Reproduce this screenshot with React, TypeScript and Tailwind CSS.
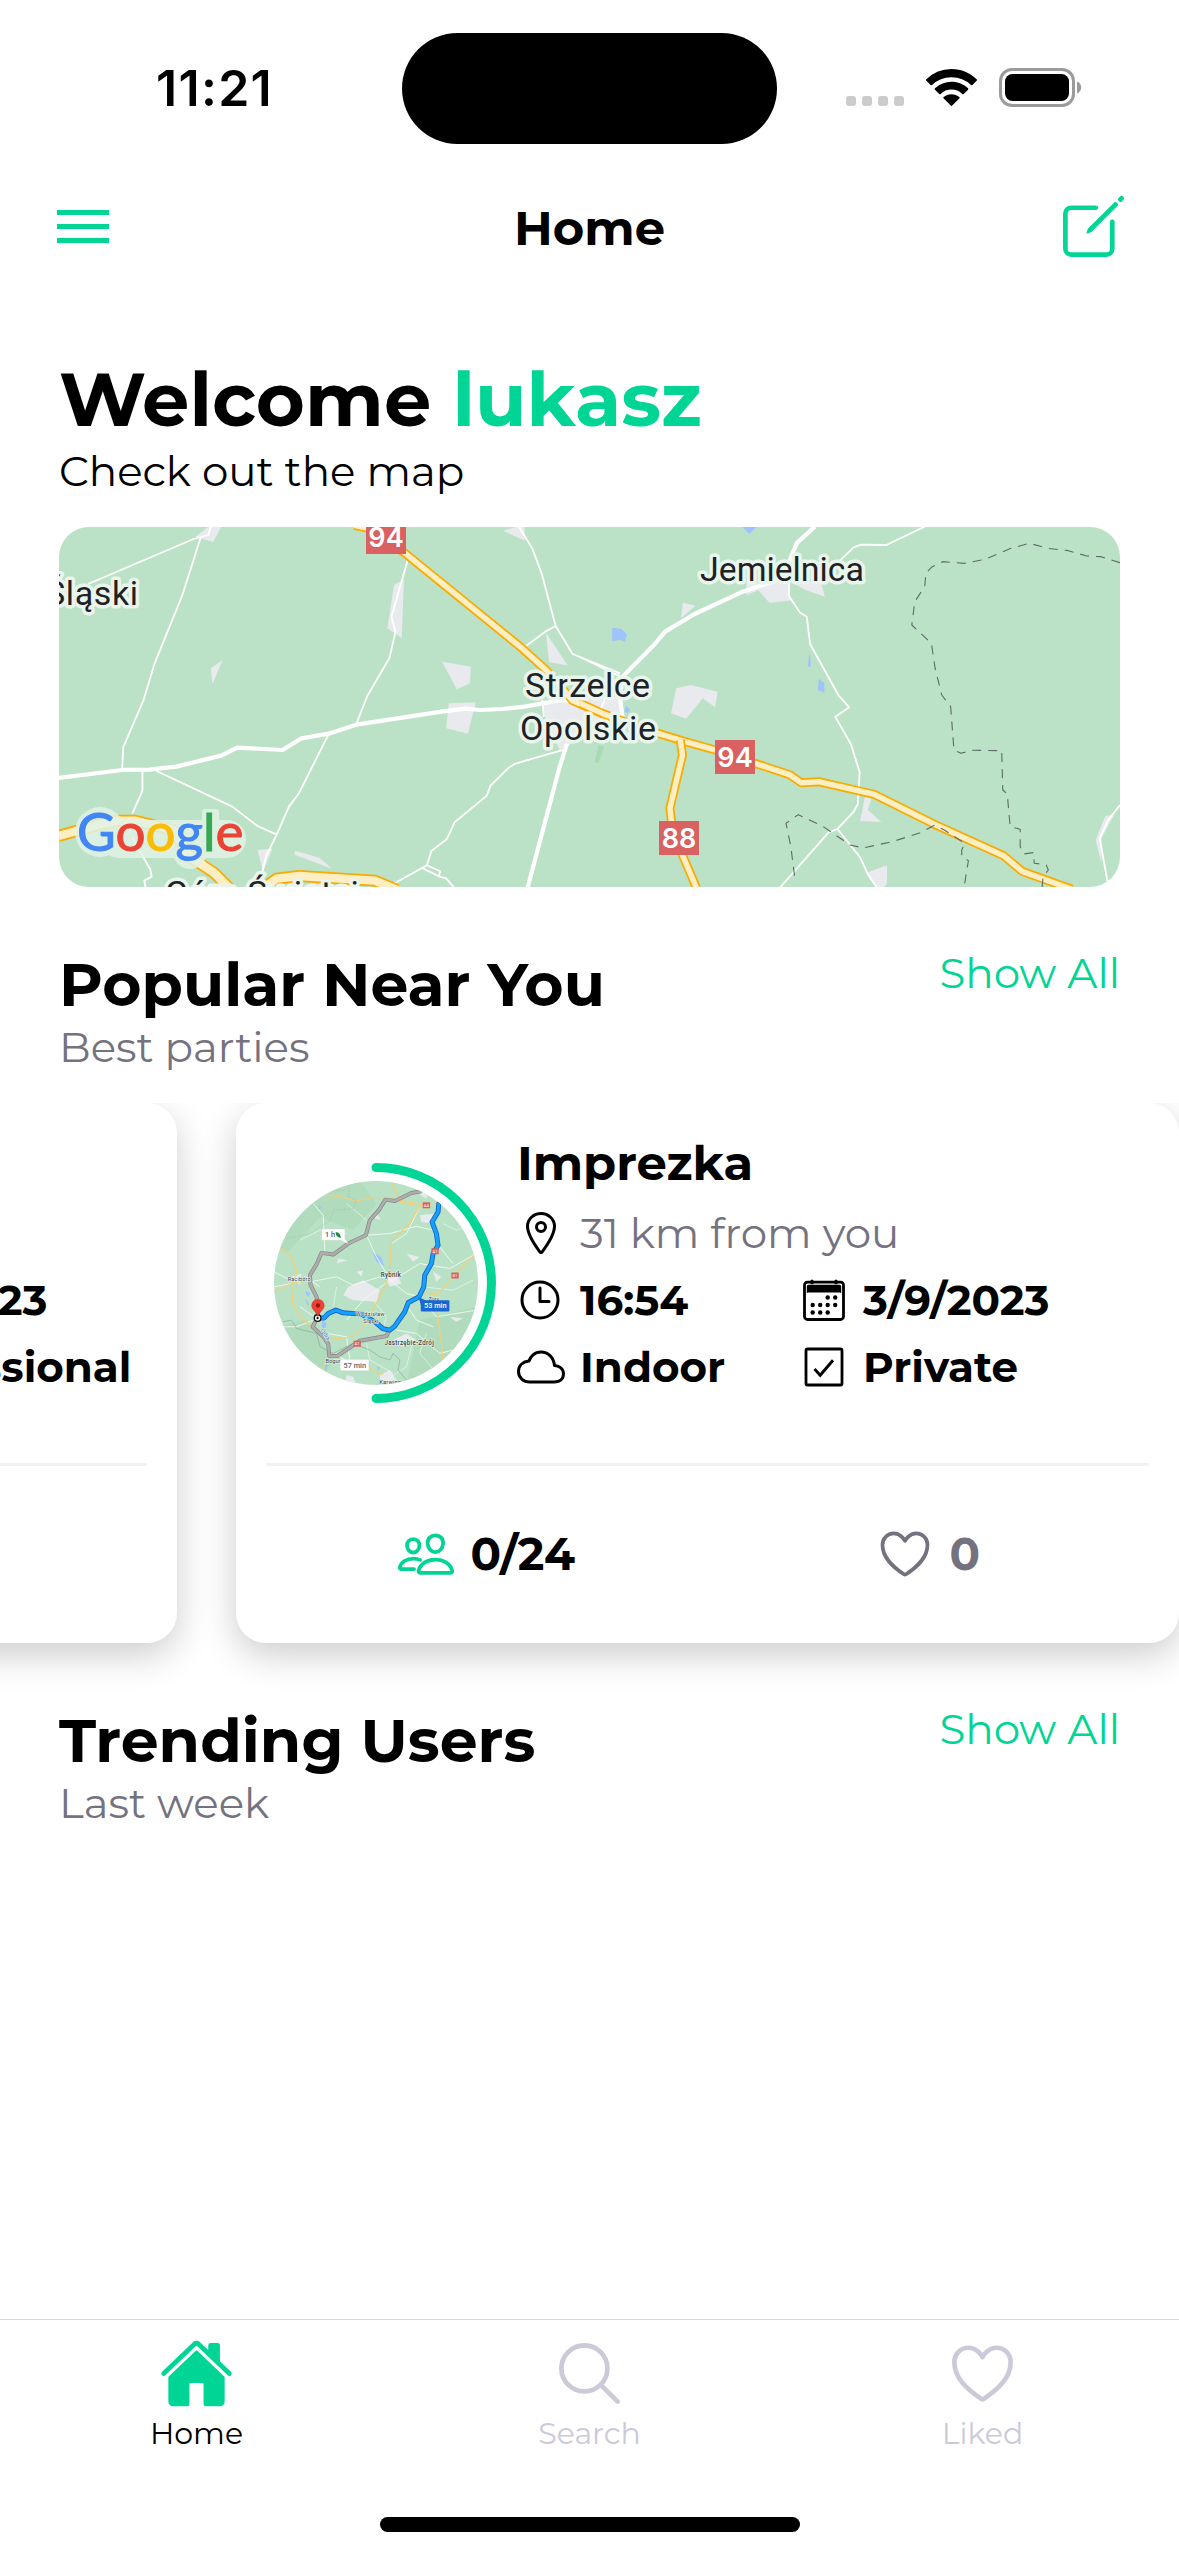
import React from "react";
import {
  IoCloudOutline,
  IoCreateOutline,
  IoHeartOutline,
  IoHome,
  IoLocationOutline,
  IoPeopleOutline,
  IoSearchOutline,
  IoTimeOutline,
} from "react-icons/io5";

function StatusBar() {
  return (
    <div className="flex h-[177px] items-start pt-[33px]">
      <div className="w-[402px] pt-[25px] pl-[156px] font-['Inter',sans-serif] text-[50px] leading-[60px] font-semibold tracking-[1.3px]">
        11:21
      </div>
      <div className="h-[111px] w-[375px] rounded-full bg-black" />
      <div className="flex items-end pt-[35px] pl-[69px]">
        <div className="mb-px flex gap-[6px]">
          {[0, 1, 2, 3].map((i) => (
            <span key={i} className="h-[10px] w-[10px] rounded-[3px] bg-[#cccccc]" />
          ))}
        </div>
        <svg className="mb-px ml-[22px] h-[37px] w-[51px]" viewBox="0 0 51 37">
          <path d="M25.5 0C35.3 0 44.2 3.9 50.6 10.2a1 1 0 0 1 0 1.5l-4.2 4.3a1 1 0 0 1-1.4 0A28 28 0 0 0 25.5 8.200 28 28 0 0 0 6 16a1 1 0 0 1-1.400 0L.4 11.700a1 1 0 0 1 0-1.500A36 36 0 0 1 25.500 0z" />
          <path d="M25.5 12.700c6.400 0 12.200 2.500 16.500 6.500a1 1 0 0 1 0 1.500l-4.200 4.200a1 1 0 0 1-1.400 0 16 16 0 0 0-21.800 0 1 1 0 0 1-1.400 0L9 20.700a1 1 0 0 1 0-1.500 24 24 0 0 1 16.500-6.500z" />
          <path d="M25.5 25.200c3 0 5.800 1.100 7.800 2.900a1 1 0 0 1 0 1.500l-7.100 7a1 1 0 0 1-1.400 0l-7.100-7a1 1 0 0 1 0-1.500c2-1.800 4.800-2.900 7.800-2.900z" />
        </svg>
        <svg className="ml-[22px] h-[39px] w-[83px]" viewBox="0 0 83 39">
          <rect x="1.5" y="1.5" width="73" height="36" rx="11.500" fill="none" stroke="#9b9b9b" strokeWidth="3" />
          <rect x="6" y="6" width="64" height="27" rx="7.500" />
          <path d="M78 13.500c2.800 1 4.200 3.500 4.200 6s-1.400 5-4.200 6z" fill="#9b9b9b" />
        </svg>
      </div>
    </div>
  );
}

function Header() {
  return (
    <div className="flex h-[99px] items-center justify-between pr-[48px] pl-[57px]">
      <div className="flex w-[66px] flex-col gap-[9px]">
        <span className="h-[5px] w-[52px] bg-[#00d595]" />
        <span className="h-[5px] w-[52px] bg-[#00d595]" />
        <span className="h-[5px] w-[52px] bg-[#00d595]" />
      </div>
      <h1 className="pt-[3px] text-[48px] leading-[59px] font-bold">Home</h1>
      <IoCreateOutline className="size-[75px] text-[#00d595]" />
    </div>
  );
}

const THIN = "M130 222 415 87 455 75 462 50|M435 80 385 255 310 460 280 570 225 712 222 780|M277 780V842L250 910|M315 783 520 890 588 948 640 974|M780 673 700 850 673 890 640 974 612 1036 600 1090|M995 147 950 320 961 365 945 443 885 558 855 642|M1295 50 1332 118 1356 190 1394 348 1440 432 1568 490|M1310 411 1366 365 1394 348|M1415 720 1350 740 1283 762 1265 775 1218 827 1208 857 1121 937 1100 987 1058 1023 1046 1066 955 1122|M1046 1066 1082 1084 1078 1099 1036 1076M1078 1099 1098 1105 1120 1134|M250 985 298 1078 302 1100 282 1112 285 1134|M1358 570 1362 620";
const THIN_R = "M700 155 740 112 760 104 828 105 932 50|M565 215V258L595 308 613 320 622 402 700 558 728 592 690 620 733 704 756 787 751 882 740 905 696 957 757 1042 778 1092 803 1134|M696 957 672 967 540 1134|M0 441 110 500|M1460 885 1428 930 1405 985 1427 1120|M70 560 55 600";
const BORDER_R = "M1460 158 1408 140 1370 138 1320 122 1265 115 1215 100 1165 115 1095 148 1040 160 980 155 950 172 935 190 932 230 905 275 897 345 950 400 960 475 978 555 1002 590 1011 720 1030 730 1060 721 1140 722 1143 840 1155 852 1163 950 1190 958 1190 1010 1200 1032 1226 1028 1228 1060 1260 1064 1266 1080 1252 1100 1249 1134|M1040 1120 1050 1052 1032 1040 1032 1020 1040 1000 985 960 958 946 920 968 845 995 765 1014 730 1005 655 948 590 914 557 940 570 1010 582 1115";

function Paths({ d, ...rest }: { d: string } & React.SVGProps<SVGPathElement>) {
  return <path d={d.split("|").join("")} fill="none" vectorEffect="non-scaling-stroke" strokeLinejoin="round" {...rest} />;
}

function Highway({ d, w = 6.500 }: { d: string; w?: number }) {
  return (
    <>
      <Paths d={d} stroke="#f9ab00" strokeWidth={w + 2.500} />
      <Paths d={d} stroke="#feeec3" strokeWidth={w - 1} />
    </>
  );
}

function Shield({ x, y, n }: { x: number; y: number; n: string }) {
  return (
    <>
      <rect x={x} y={y} width="40" height="34" fill="#d96162" />
      <text x={x + 20} y={y + 27} textAnchor="middle" className="fill-white font-['Inter',sans-serif] text-[27px] font-semibold">
        {n}
      </text>
    </>
  );
}

function Town({ x, y, w, children }: { x: number; y: number; w: number; children: string }) {
  return (
    <text
      x={x}
      y={y}
      textLength={w}
      className="fill-[#202124] stroke-[#e9f5ec] stroke-[7px] font-['Roboto',sans-serif] text-[34px] [paint-order:stroke] [stroke-linejoin:round]"
    >
      {children}
    </text>
  );
}

function RegionMap() {
  return (
    <svg className="mt-[31px] h-[360px] w-[1061px] rounded-[30px] bg-[#bbe2c6]" viewBox="59 527 1061 360">
      <g transform="translate(40 510) scale(.3699 .3333)">
        <path
          fill="#e8eaed"
          d="M420 80 455 50H490L468 96zM462 475 494 450 466 522zM957 225 984 208 978 384 939 355zM1087 455 1165 470 1162 520 1127 538zM1105 580 1178 577 1157 671 1098 655zM1252 62 1290 50H1310V92zM1368 368 1426 466 1376 457zM588 1020 628 1016 603 1085zM690 1022 755 1043 790 1076 688 1034zM1360 580 1500 560H1568L1540 640 1440 700 1405 720 1365 620z"
        />
        <path fill="#9fc3fc" d="M1547 353 1568 356V390L1547 392z" />
        <path fill="#a8dab5" d="M1510 705 1525 710 1510 760 1499 757z" />
        <Paths d={THIN} stroke="#fff" strokeWidth="1.8" />
        <Paths
          d="M50 804 222 780 295 779 368 770 490 737 533 713 656 720 707 685 780 671 855 644 1090 604 1150 596 1190 600 1250 597 1310 590 1400 572 1450 570"
          stroke="#fff"
          strokeWidth="4.200"
        />
        <Paths d="M1318 1134 1405 770 1425 700" stroke="#fff" strokeWidth="4.200" />
        <Highway d="M850 46 890 56 985 128 1115 245 1300 412 1370 482 1440 572 1568 634" />
        <Highway d="M50 978 160 944 210 932 255 932 360 960 405 1040 470 1088 512 1134" w={9.500} />
        <Highway d="M605 1134 640 1106 700 1098 905 1112 965 1140" w={9.500} />
      </g>
      <g transform="translate(580 510) scale(.3699 .3333)">
        <path
          fill="#e8eaed"
          d="M450 218H565L568 272 512 278 482 240 450 256zM570 215 652 218 662 260 610 240zM278 278 312 287 273 325zM260 535 300 525 372 545 365 592 332 565 287 626 246 610zM770 862 788 866 778 900 815 936 757 933zM778 1087 830 1066V1120L820 1134H800zM1420 918 1445 912 1410 985V1060L1394 990zM30 565H110L118 620 60 600z"
        />
        <path fill="#9fc3fc" d="M438 50H478L458 72zM90 354 112 357 127 373 122 395 108 389 87 392zM619 435H622L624 470H616zM646 506 660 520 661 548 643 540zM125 587 136 600 128 610 120 604z" />
        <Paths d={THIN_R} stroke="#fff" strokeWidth="1.8" />
        <Paths d="M635 50 587 98 567 150 562 200 440 245 310 312 230 365 200 405 115 500 108 560 115 620" stroke="#fff" strokeWidth="4.200" />
        <Highway d="M0 580 60 610 120 635 205 668 275 692 365 720 568 795 598 818 645 815 795 853 958 943 1145 1037 1195 1084 1330 1138" />
        <Highway d="M271 690 277 735 243 895 248 940 275 1030 315 1134" />
        <Paths d={BORDER_R} stroke="#5d6b66" strokeWidth="1.1" strokeDasharray="9 7" />
      </g>
      <Shield x={366} y={520} n="94" />
      <Shield x={715} y={740} n="94" />
      <Shield x={659} y={821} n="88" />
      <Town x={45} y={605} w={93}>Śląski</Town>
      <Town x={700} y={581} w={164}>Jemielnica</Town>
      <Town x={525} y={697} w={125}>Strzelce</Town>
      <Town x={520} y={740} w={136}>Opolskie</Town>
      <Town x={165} y={905} w={194}>Góra Świętej</Town>
      <g fill="#e2f2e6" opacity=".85">
        <circle cx="100" cy="832" r="25" />
        <rect x="100" y="820" width="146" height="38" rx="19" />
        <rect x="202" y="809" width="17" height="48" rx="2" />
        <circle cx="190" cy="852" r="17" />
      </g>
      <text x="77" y="851" className="font-['Lato',sans-serif] text-[53px]">
        <tspan fill="#4285f4" className="stroke-[#4285f4] stroke-1">G</tspan>
        <tspan fill="#ea4335" className="stroke-[#ea4335] stroke-1">o</tspan>
        <tspan fill="#fbbc05" className="stroke-[#fbbc05] stroke-1">o</tspan>
        <tspan fill="#4285f4" className="stroke-[#4285f4] stroke-1">g</tspan>
        <tspan fill="#34a853" className="stroke-[#34a853] stroke-1">l</tspan>
        <tspan fill="#ea4335" className="stroke-[#ea4335] stroke-1">e</tspan>
      </text>
    </svg>
  );
}

function RouteLabel({ x, y, w, blue, children }: { x: number; y: number; w: number; blue?: boolean; children: string }) {
  return (
    <>
      <rect x={x} y={y} width={w} height="34" rx="3" fill={blue ? "#1967d2" : "#fff"} stroke={blue ? "none" : "#c9cdc9"} />
      <text x={x + 10} y={y + 25} fill={blue ? "#fff" : "#5f6368"} className="font-['Roboto',sans-serif] text-[22px] font-medium">
        {children}
      </text>
    </>
  );
}

function RouteMap() {
  const grey = "M605 213 575 218 525 242 497 238 478 268 450 300 438 345 385 370 340 403 305 398 290 432 270 465 272 495 290 530 294 590 278 620 310 650 325 672 328 708 352 708 420 662 500 648 508 630";
  const blue = "M294 594 312 594 325 580 348 570 370 578 425 582 465 605 490 626 510 630 525 618 555 575 565 548 598 530 612 500 615 465 635 430 640 400 655 375 650 340 637 305 655 275 657 250";
  return (
    <svg className="size-[204px] rounded-full bg-[#b9e1c5]" viewBox="162 182 613 613">
      <path fill="#acd9b9" d="M162 182H420L470 250 400 330 300 290 200 400 162 380zM600 600 775 560V795H560zM162 620 260 600 340 720 300 795H162z" opacity=".6" />
      <path fill="#e8eaed" d="M385 500 430 480 480 510 470 545 400 540 370 525zM490 455 530 460 545 490 510 500zM600 285 650 280 640 310 605 305zM480 765 510 750 540 795H480zM520 660 560 640 590 660 550 680zM380 765 400 770 410 795H375zM215 470 245 460 240 495zM560 400 600 410 580 425zM410 455 430 450 425 470zM690 590 730 595 710 605zM355 415 385 420 350 430zM590 215 625 205 620 235zM455 290 470 280 485 300zM640 455 665 470 650 485z" />
      <path fill="#9fc3fc" d="M458 396 485 410 492 437 470 425zM258 512 270 518 268 530 258 524zM256 535 268 552 262 556zM308 600 320 610 316 628 305 620zM315 735 325 735 315 755zM296 255 306 262 298 268zM472 738 480 745 474 752z" />
      <g fill="none" stroke="#f4fbf6" strokeWidth="3" opacity=".85">
        <path d="M162 455 200 475 270 480 300 500M280 250 310 285 315 395M438 345 510 340 590 318 640 330M270 485 350 470 400 495 480 470 520 480 600 430 690 445 770 400M510 480 560 520 600 530 650 590 770 570M162 500 215 490M240 560 290 595M440 345 470 410 500 460M510 480 430 540 380 600M320 640 380 650 390 720M530 630 590 640 660 700 700 690M600 260 560 340 515 370M660 380 700 430M180 620 230 620 280 600M555 545 590 600 640 620" />
        <path d="M350 500 340 560M460 540 500 590 490 626M610 500 700 510 760 480M440 670 450 720 520 760M580 660 560 740 500 780M620 640 600 700 650 760M240 360 300 330 380 340M380 250 440 300M670 310 710 330 740 320" strokeWidth="2" />
      </g>
      <g fill="none" stroke="#f6cf75" strokeWidth="3.500">
        <path d="M310 225 360 228 410 242 470 230 530 238 620 255 660 245M515 182 530 215 540 245 600 258 570 310 515 360 510 440 500 490 470 550 430 620 400 650 330 658M180 385 210 402 232 460 215 490 218 550 250 600 280 620M162 515 215 490 270 480M600 515 650 525 680 495 705 460 765 405M650 530 655 600 665 670 670 720M350 715 330 700 310 740 308 770M440 740 490 765" />
      </g>
      <path d="M190 605 215 600 230 625 290 640 300 680 340 700 400 670 450 690 480 710 510 720 520 700 540 720 535 750 560 780" fill="none" stroke="#84a391" strokeWidth="1.800" />
      <path d="M300 215 370 210 390 200 385 230 410 240 400 265 340 270 330 300 270 340 200 355" fill="none" stroke="#93b8a0" strokeWidth="1.500" strokeDasharray="4 4" />
      <path d={grey} fill="none" stroke="#858585" strokeWidth="12" strokeLinejoin="round" />
      <path d={grey} fill="none" stroke="#adadad" strokeWidth="8" strokeLinejoin="round" />
      <path d={blue} fill="none" stroke="#1566c8" strokeWidth="15" strokeLinejoin="round" strokeLinecap="round" />
      <path d={blue} fill="none" stroke="#16a0ff" strokeWidth="9.500" strokeLinejoin="round" strokeLinecap="round" />
      {[
        [609, 246, "A4"],
        [635, 384, "A1"],
        [695, 457, "81"],
        [401, 662, "A1"],
      ].map(([x, y, t], i) => (
        <g key={i}>
          <rect x={x as number} y={y as number} width="22" height="18" fill="#d96162" />
          <text x={(x as number) + 11} y={(y as number) + 14} textAnchor="middle" className="fill-white font-['Roboto',sans-serif] text-[13px]">
            {t}
          </text>
        </g>
      ))}
      <g className="fill-[#3c4043] stroke-[#e9f5ec] stroke-[3px] font-['Roboto',sans-serif] text-[19px] font-medium [paint-order:stroke]">
        <text x="483" y="469" textLength="60">Rybnik</text>
        <text x="203" y="483" textLength="68" className="text-[17px] font-normal">Racibórz</text>
        <text x="408" y="587" textLength="86" className="text-[17px] font-normal">Wodzisław</text>
        <text x="430" y="609" textLength="46" className="text-[17px] font-normal">Śląski</text>
        <text x="626" y="542" className="text-[16px] font-normal">Żory</text>
        <text x="494" y="675" textLength="148">Jastrzębie-Zdrój</text>
        <text x="317" y="728" className="text-[17px] font-normal">Bogumin</text>
        <text x="478" y="793" textLength="66" className="text-[18px] font-normal">Karwina</text>
        <text transform="translate(302 630) rotate(58)" className="fill-[#3f7fd0] text-[18px] font-normal">Odra</text>
      </g>
      <path d="M362 360 385 370 372 352zM358 708 370 722H380z" fill="#fff" />
      <RouteLabel x={305} y={326} w={70}>1 h</RouteLabel>
      <path d="M347 336c10 0 16 6 15 17-9-1-15-7-15-17z" fill="#1e8e3e" />
      <RouteLabel x={361} y={718} w={86}>57 min</RouteLabel>
      <path d="M596 530 625 545 604 556z" fill="#1967d2" />
      <RouteLabel x={603} y={540} w={86} blue>53 min</RouteLabel>
      <circle cx="293" cy="594" r="10" fill="#fff" stroke="#111" strokeWidth="4" />
      <circle cx="293" cy="594" r="3.500" />
      <path d="M294 590c-2-14-19-20-19-34a19 19 0 0 1 38 0c0 14-17 20-19 34z" fill="#ea4335" stroke="#c5221f" />
      <circle cx="294" cy="556" r="6.500" fill="#a50e0e" />
    </svg>
  );
}

function CalendarIcon() {
  return (
    <svg className="size-[48px]" viewBox="0 0 48 48">
      <rect x="4.500" y="6.200" width="39" height="37.300" rx="3" fill="none" stroke="#000" strokeWidth="2.800" />
      <path d="M12 5v4M36 5v4" stroke="#000" strokeWidth="3" strokeLinecap="round" />
      <path d="M6.200 8.200H41.800V18H6.200z" fill="#fff" />
      <path d="M6.800 17V10.500Q6.800 8.800 8.500 8.800H39.500Q41.200 8.800 41.200 10.500V17Q40.500 16.500 39.500 16.500H8.500Q7.500 16.500 6.800 17z" />
      {[[27.700, 21.500], [35.200, 21.500], [12.700, 29], [20.200, 29], [27.700, 29], [35.200, 29], [12.700, 36.500], [20.200, 36.500], [27.700, 36.500]].map(([x, y], i) => (
        <circle key={i} cx={x} cy={y} r="2.200" />
      ))}
    </svg>
  );
}

function CheckIcon() {
  return (
    <svg className="size-[48px]" viewBox="0 0 48 48" fill="none" stroke="#000">
      <rect x="6" y="6" width="36" height="36" rx="1.500" strokeWidth="2.800" />
      <path d="M14.500 26 20.200 32.200 33 17.300" strokeWidth="2.900" />
    </svg>
  );
}

function Fact({ icon, children, light }: { icon: React.ReactNode; children: string; light?: boolean }) {
  return (
    <div className="flex h-[67px] items-center gap-[15px] whitespace-nowrap">
      <span className="flex w-[48px] justify-center">{icon}</span>
      <span className={light ? "pt-[2px] text-[42px] leading-[51px] text-[#75727f]" : "pt-[2px] text-[42px] leading-[51px] font-bold"}>{children}</span>
    </div>
  );
}

type Party = { name?: string; distance?: string; time?: string; place?: string; date: string; access: string; guests?: string; likes?: string };

function PartyCard({ party }: { party: Party }) {
  return (
    <article className="h-[540px] w-[943px] shrink-0 rounded-[30px] bg-white shadow-[0_12px_36px_rgba(0,0,0,0.2)]">
      <div className="flex h-[360px] pl-[20px]">
        <div className="relative mt-[60px] grid size-[240px] shrink-0 place-items-center">
          {party.name && <RouteMap />}
          <svg className="absolute inset-0" viewBox="0 0 240 240">
            <path d="M120 4.500a115.500 115.500 0 0 1 0 231" fill="none" stroke="#00d595" strokeWidth="9" strokeLinecap="round" />
          </svg>
        </div>
        <div className="pt-[31px] pl-[21px]">
          <h3 className="mb-[6px] h-[59px] text-[48px] leading-[59px] font-bold">{party.name}</h3>
          <div className="h-[67px]">
            {party.distance && (
              <Fact light icon={<IoLocationOutline className="size-[48px]" />}>
                {party.distance}
              </Fact>
            )}
          </div>
          <div className="grid grid-cols-[283px_auto]">
            <div>
              {party.time && <Fact icon={<IoTimeOutline className="size-[48px] -translate-x-[1px]" />}>{party.time}</Fact>}
              {party.place && <Fact icon={<IoCloudOutline className="size-[48px] shrink-0" />}>{party.place}</Fact>}
            </div>
            <div>
              <Fact icon={<CalendarIcon />}>{party.date}</Fact>
              <Fact icon={<CheckIcon />}>{party.access}</Fact>
            </div>
          </div>
        </div>
      </div>
      <div className="mx-[30px] h-[3px] bg-[#f2f2f2]" />
      {party.guests && (
        <div className="mx-[30px] grid h-[175px] grid-cols-2 text-[45px] leading-[55px] font-bold">
          <div className="flex items-center justify-center gap-[15px] pr-[3px]">
            <IoPeopleOutline className="size-[60px] text-[#00d595]" />
            {party.guests}
          </div>
          <div className="flex items-center justify-center gap-[14px] pr-px text-[#75727f]">
            <IoHeartOutline className="size-[60px]" />
            {party.likes}
          </div>
        </div>
      )}
    </article>
  );
}

function SectionHead({ title, note }: { title: string; note: string }) {
  return (
    <div className="flex h-[124px] items-start justify-between px-[59px]">
      <div>
        <h2 className="text-[60px] leading-[73px] font-bold">{title}</h2>
        <p className="pt-px text-[42px] leading-[51px] text-[#75727f]">{note}</p>
      </div>
      <a className="text-[42px] leading-[51px] text-[#00d595]">Show All</a>
    </div>
  );
}

const tabs = [
  { label: "Home", Icon: IoHome, active: true },
  { label: "Search", Icon: IoSearchOutline, active: false },
  { label: "Liked", Icon: IoHeartOutline, active: false },
];

export default function App() {
  return (
    <div className="flex h-[2556px] w-[1179px] flex-col overflow-hidden bg-white font-['Montserrat','Inter',sans-serif] text-black">
      <StatusBar />
      <Header />
      <div className="flex-1">
        <div className="px-[59px] pt-[78px]">
          <h2 className="text-[75px] leading-[91px] font-bold">
            Welcome <span className="text-[#00d595]">lukasz</span>
          </h2>
          <p className="-mb-px pt-px text-[42px] leading-[51px]">Check out the map</p>
          <RegionMap />
        </div>
        <div className="mt-[61px]">
          <SectionHead title="Popular Near You" note="Best parties" />
          <div className="mt-[31px] flex h-[601px] justify-end gap-[59px] overflow-hidden">
            <PartyCard party={{ date: "3/9/2023", access: "Professional" }} />
            <PartyCard
              party={{ name: "Imprezka", distance: "31 km from you", time: "16:54", place: "Indoor", date: "3/9/2023", access: "Private", guests: "0/24", likes: "0" }}
            />
          </div>
        </div>
        <SectionHead title="Trending Users" note="Last week" />
      </div>
      <nav className="h-[237px] border-t border-[#d8d8d8]">
        <div className="grid h-[197px] grid-cols-3 pt-[16px]">
          {tabs.map(({ label, Icon, active }) => (
            <div key={label} className={active ? "flex flex-col items-center text-[#00d595]" : "flex flex-col items-center text-[#cccad8]"}>
              <Icon className="size-[75px]" />
              <span className={active ? "mt-[4px] text-[30px] leading-[37px] text-black" : "mt-[4px] text-[30px] leading-[37px]"}>{label}</span>
            </div>
          ))}
        </div>
        <div className="mx-auto h-[15px] w-[420px] rounded-full bg-black" />
      </nav>
    </div>
  );
}
